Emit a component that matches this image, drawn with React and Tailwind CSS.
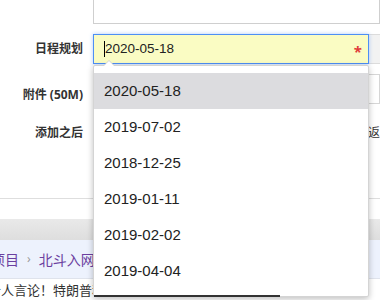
const dates = ["2020-05-18", "2019-07-02", "2018-12-25", "2019-01-11", "2019-02-02", "2019-04-04"];

const App = () => {
    return (
        <div className="relative w-[380px] h-[300px] overflow-hidden bg-white text-[#333]" style={{ fontFamily: '"Noto Sans", "Noto Sans CJK SC", sans-serif' }}>
            {/* textarea bottom */}
            <div className="ml-[93px] h-[24px] border border-t-0 border-[#cfcfcf]"></div>

            {/* 日程规划 */}
            <div className="flex items-center mt-[10px] h-[30px]">
                <div className="w-[83px] text-right text-[12px] font-bold">日程规划</div>
                <div className="relative ml-[10px] w-[276px] h-[30px] bg-[#fafcc3] border border-[#4d8ff5] shadow-[0_0_4px_rgba(77,143,245,0.45)] flex items-center pl-[10px] text-[13.5px] text-[#222]">
                    <span className="w-px h-[16px] bg-black"></span>
                    <span style={{ fontFamily: '"Liberation Sans", sans-serif' }}>2020-05-18</span>
                    <span className="absolute right-[6px] top-[5px] text-[#e03c3c] text-[15px] font-bold">*</span>
                </div>
                <div className="flex-1 h-[30px] bg-[#f2f2f2] border-y border-[#dcdcdc]"></div>
            </div>

            {/* 附件 */}
            <div className="flex items-start mt-[10px] h-[30px]">
                <div className="w-[83px] mt-[12px] text-right text-[12px] font-bold">附件 (50M)</div>
                <div className="ml-[10px] flex-1 h-[30px] border border-[#d6d6d6]"></div>
            </div>

            {/* 添加之后 */}
            <div className="flex items-center mt-[14px] h-[30px]">
                <div className="w-[83px] text-right text-[12px] font-bold">添加之后</div>
                <div className="ml-auto text-[12px] text-[#333] -mr-[12px]">返回</div>
            </div>

            <div className="mt-[50px] border-t border-[#dedede]"></div>
            <div className="mt-[20px] h-[21px] bg-gradient-to-b from-[#e9e9e9] to-[#dedede]"></div>
            <div className="h-[39px] bg-[#edf2fd] border-b border-[#dfe3ec] flex items-center text-[14px] text-[#6b3fa0] -ml-[9px]">
                <span>项目</span>
                <span className="mx-[8px] text-[#999] text-[12px]">›</span>
                <span>北斗入网</span>
            </div>
            <div className="pt-[2px] text-[13px] text-[#333] -ml-[12px] whitespace-nowrap">个人言论！特朗普称</div>

            {/* dropdown */}
            <div className="absolute left-[93px] top-[65px] w-[276px] h-[232px] bg-white border border-[#d4d4d4] rounded-[2px] shadow-[0_2px_6px_rgba(0,0,0,0.25)] pt-[7px]">
                <div className="absolute -top-[6px] left-[9px] w-0 h-0 border-x-[6px] border-x-transparent border-b-[6px] border-b-[#d4d4d4]"></div>
                <div className="absolute -top-[5px] left-[10px] w-0 h-0 border-x-[5px] border-x-transparent border-b-[5px] border-b-white"></div>
                {dates.map((d, i) => (
                    <div key={d} className={`h-[36px] flex items-center pl-[10px] text-[15px] text-[#222] ${i === 0 ? "bg-[#dcdcdf]" : ""}`} style={{ fontFamily: '"Liberation Sans", sans-serif' }}>
                        {d}
                    </div>
                ))}
                <div className="absolute -bottom-px left-0 w-[186px] h-[2px] bg-[#333]"></div>
            </div>
        </div>
    );
};

export default App;
